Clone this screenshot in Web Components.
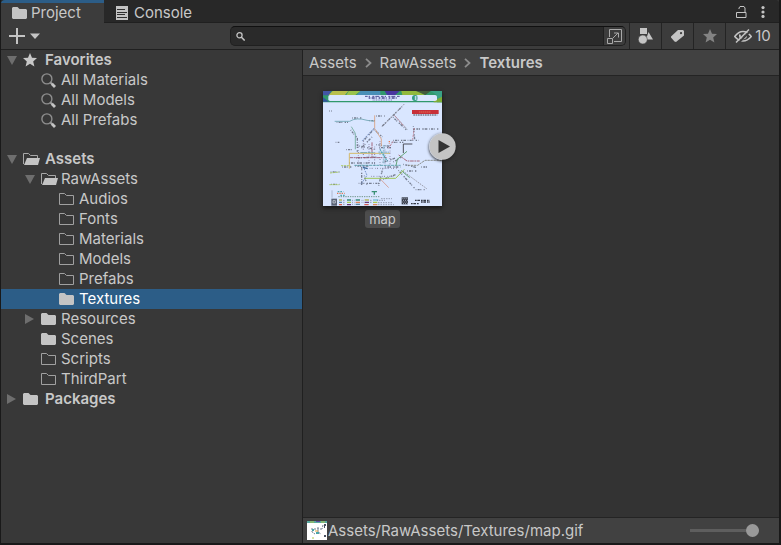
<!DOCTYPE html>
<html lang="en">
<head>
<meta charset="utf-8">
<title>Project</title>
<style>
html,body{height:100%;margin:0;background:#191919}
body{font:15px/20px Inter,"Noto Sans",sans-serif;color:#c8c8c8}
</style>
</head>
<body>
<project-window></project-window>
<script>
const ICONS = {
folder:['15 12','<path fill="#c4c4c4" d="M1 0h4.500l2 2H14l1 1v8l-1 1H1l-1-1V1z"/>'],
outline:['15 12','<path fill="none" stroke="#a0a0a0" d="M.5.5h5l2 2h7v9H.5z"/>'],
open:['17 12','<path fill="none" stroke="#a8a8a8" d="M.5 11V.5h5l2 2h7V5"/><path fill="#c4c4c4" d="M4 5h13l-2 7H1z"/>'],
doc:['12 14','<path fill="#c4c4c4" d="M0 0h12v14H0z"/><path stroke="#303030" d="M1 3.500h8M1 6.500h10M1 8.500h8M1 11.500h10"/>'],
lock:['11 12','<path fill="none" stroke="#c4c4c4" d="M.5 6.500h9.500v5H.5zM3 3V2l1-1.500h4L9 2v4.500"/>'],
dots:['4 12','<g fill="#c4c4c4"><circle cx="2" cy="1.600" r="1.600"/><circle cx="2" cy="6" r="1.600"/><circle cx="2" cy="10.400" r="1.600"/></g>'],
plus:['16 16','<path stroke="#c4c4c4" stroke-width="2" d="M0 8h16M8 0v16"/>'],
drop:['10 6','<path fill="#c4c4c4" d="M0 .5h10L5 6z"/>'],
down:['10 9','<path fill="#6e6e6e" d="M0 0h10L5 9z"/>'],
right:['9 10','<path fill="#6e6e6e" d="M0 0v10l9-5z"/>'],
star:['14 14','<path fill="currentColor" d="m7 0 2 4.700 5 .4-3.800 3.300 1.200 5L7 10.800l-4.400 2.600 1.200-5L0 5.100l5-.4z"/>'],
search:['9 9','<circle cx="3.500" cy="3.300" r="2.600" fill="none" stroke="#c4c4c4" stroke-width="1.300"/><path stroke="#c4c4c4" stroke-width="1.600" d="m5.200 5 3.500 3.500"/>'],
lens:['15 15','<circle cx="5.900" cy="5.900" r="5" fill="none" stroke="#8e8e8e" stroke-width="1.400"/><path stroke="#a6a6a6" stroke-width="1.800" d="m9.600 9.600 1.400 1.400"/><path stroke="#c4c4c4" stroke-width="2.800" d="m10.800 10.800 3.200 3.200"/>'],
expand:['15 15','<path fill="none" stroke="#a8a8a8" d="M2.500 8V.5h12v12H7M.5 9.500h5v5h-5zM6 9l5-5M7 4h4.500v4.500"/>'],
shapes:['15 16','<path fill="#c4c4c4" d="M2 0h7v6H2zM10.500 4 15 11.500H8z"/><circle cx="4.800" cy="11.500" r="4.500" fill="#c4c4c4" stroke="#3c3c3c" stroke-width=".6"/>'],
tag:['13 12','<path fill="#c4c4c4" fill-rule="evenodd" d="M7 0h5l1 1v4.500L5 12 3.500 11.500 0 7.500 0 6.500zM10 2a1 1 0 1 0 .1 2.200A1 1 0 0 0 10 2z"/>'],
eye:['18 14','<g fill="none" stroke="#c4c4c4"><path stroke-width="1.500" d="M.7 7.500Q4.500 2.500 9 2.500t8.300 5Q13.500 12 9 12T.7 7.500z"/><path stroke-width="1.800" d="M6 5.500Q5 9.500 9 9.500q3.500 0 3-4"/><path stroke="#3c3c3c" stroke-width="2" d="M3.800 14.500 17 1.500"/><path stroke-width="1.500" d="M2 13.500 15 .5"/></g>'],
chevron:['7 10','<path fill="none" stroke="#8c8c8c" stroke-width="1.800" d="m1 .8 4.500 4.200L1 9.200"/>'],
play:['27 27','<circle cx="13.500" cy="13.500" r="13.200" fill="#c4c4c4"/><path fill="#333" d="M9.500 7v13L21 13.500z"/>']
};
function define(name, html, setup){
  const t=document.createElement('template'); t.innerHTML=html;
  customElements.define(name, class extends HTMLElement{
    connectedCallback(){
      if(this.shadowRoot)return;
      const r=this.attachShadow({mode:'open'});
      r.append(t.content.cloneNode(true));
      if(setup)setup(this,r);
    }
  });
}
define('ui-icon','<style>:host{display:block;flex:none}svg{display:block}</style>',(el,r)=>{
  const [size,body]=ICONS[el.getAttribute('name')],[w,h]=size.split(' ');
  const b=document.createElement('div');
  b.innerHTML=`<svg aria-hidden="true" width="${w}" height="${h}" viewBox="0 0 ${size}">${body}</svg>`;
  r.append(b);
});
define('panel-tab',`<style>
:host{display:block}
button{all:unset;box-sizing:border-box;display:flex;align-items:center;gap:6px;height:24px;padding:2px 21px 0 12px}
:host([active]) button{background:linear-gradient(#2c5d87 3px,#3c3c3c 3px);border-radius:4px 0 0 0;width:103px;gap:4px;padding-left:11px}
</style><button role="tab"><slot></slot></button>`,(el,r)=>{
  const b=r.querySelector('button');b.setAttribute('aria-selected',el.hasAttribute('active'));
  const i=document.createElement('ui-icon');i.setAttribute('name',el.getAttribute('icon'));b.prepend(i);
});
define('tool-button',`<style>
:host{display:block;align-self:stretch}
button{all:unset;box-sizing:border-box;height:100%;width:100%;min-width:32px;display:flex;align-items:center;justify-content:center;gap:3px}
:host([divided]) button{border-left:1px solid #242424}
</style><button><slot></slot></button>`,(el,r)=>r.querySelector('button').setAttribute('aria-label',el.getAttribute('label')));
define('search-field',`<style>
:host{display:flex;flex:1;min-width:0;height:20px;box-sizing:border-box;background:#2a2a2a;border:1px solid #202020;border-top-color:#101010;border-radius:5px;overflow:hidden}
label{display:flex;flex:1;align-items:center;gap:6px;padding-left:5px;min-width:0}
input{all:unset;flex:1;min-width:0;font:inherit}
button{all:unset;display:flex;align-items:center;justify-content:center;width:21px;background:#3c3c3c;border-left:1px solid #202020}
</style><label><ui-icon name="search"></ui-icon><input type="text" aria-label="Search"></label><button aria-label="Open in search"><ui-icon name="expand"></ui-icon></button>`);
define('tree-row',`<style>
:host{display:block}
button{all:unset;box-sizing:border-box;width:100%;height:20px;display:flex;align-items:center;padding-left:calc(6px + var(--depth)*18px);white-space:nowrap}
:host([root]) button{font-weight:600}
:host([selected]) button{background:#2c5d87;color:#fff}
.arrow{width:16px;flex:none;display:flex}
.icon{width:20px;flex:none;display:flex}
:host([root]) .icon{width:22px}
</style><button role="treeitem"><span class="arrow"></span><span class="icon"></span><slot></slot></button>`,(el,r)=>{
  el.style.setProperty('--depth',el.getAttribute('depth')||0);
  for(const k of ['arrow','icon']){ if(!el.hasAttribute(k))continue;
    const i=document.createElement('ui-icon');i.setAttribute('name',el.getAttribute(k));r.querySelector('.'+k).append(i);}
});
define('folder-tree',`<style>
:host{display:block;box-sizing:border-box;background:#383838;border-right:1px solid #202020;overflow:hidden}
section+section{margin-top:19px}
</style>
<section role="tree" aria-label="Favorites">
<tree-row root arrow="down" icon="star">Favorites</tree-row>
<tree-row depth="1" icon="lens">All Materials</tree-row>
<tree-row depth="1" icon="lens">All Models</tree-row>
<tree-row depth="1" icon="lens">All Prefabs</tree-row>
</section>
<section role="tree" aria-label="Folders">
<tree-row root arrow="down" icon="open">Assets</tree-row>
<tree-row depth="1" arrow="down" icon="open">RawAssets</tree-row>
<tree-row depth="2" icon="outline">Audios</tree-row>
<tree-row depth="2" icon="outline">Fonts</tree-row>
<tree-row depth="2" icon="outline">Materials</tree-row>
<tree-row depth="2" icon="outline">Models</tree-row>
<tree-row depth="2" icon="outline">Prefabs</tree-row>
<tree-row depth="2" icon="folder" selected>Textures</tree-row>
<tree-row depth="1" arrow="right" icon="folder">Resources</tree-row>
<tree-row depth="1" icon="folder">Scenes</tree-row>
<tree-row depth="1" icon="outline">Scripts</tree-row>
<tree-row depth="1" icon="outline">ThirdPart</tree-row>
<tree-row root arrow="right" icon="folder">Packages</tree-row>
</section>`);
define('map-picture',`<style>:host{display:block}svg{display:block;width:100%;height:auto}</style>
<svg viewBox="39 33 357 345" fill="none" role="img" aria-label="Transit map">
<path fill="#d9e6ff" d="M39 33h357v345H39z"/>
<path fill="#31996c" d="M39 33h357v34H39z"/>
<path fill="#4355a5" d="M39 33h25l-7 13H39z"/><path fill="#b8bf4d" d="m68 33 47 0-10 12H56z"/><path fill="#498fb7" d="M151 33h60v12h-70z"/><path fill="#9ac34b" d="m116 33 35 0-15 12h-27z"/><path fill="#4936a0" d="m224 33 45 0-13 12h-25z"/><path fill="#91b93d" d="m274 33 54 0 16 12h-67z"/><path fill="#425b3c" d="m318 33 44 0-16 12z"/><path fill="#3aa287" d="M361 33h35v34h-15V45z"/><path fill="#7dac37" d="m371 62 25-12v17h-25z"/><path fill="#33569d" d="m39 52 18 13H39z"/>
<path fill="#d9e6ff" d="M60 45h315q6 0 6 5v8q0 5-6 5H60q-5 0-5-5v-8q0-5 5-5z"/>
<g stroke="#4c4b91"><path stroke-width="3" stroke-dasharray="8 3 4 7 6 3 12 5" d="M165 49h106"/><path stroke-width="4" stroke-dasharray="5 4 9 3 3 6" d="M176 54h88"/><path stroke-width="2" stroke-dasharray="3 2" d="M188 60h60"/></g>
<circle cx="315" cy="54" r="9" fill="#329b80"/><path stroke="#d9e6ff" stroke-width="3" d="M316 48v12m3-9h5m-5 6h5"/>
<path fill="#c72f38" d="M306 90h80v12h-80z"/><path stroke="#ec8a60" stroke-width="3" stroke-dasharray="3 3" d="M328 96h36"/><path stroke="#45434c" stroke-width="3" stroke-dasharray="5 2" d="M310 105h72"/>
<g stroke="#5c6373" stroke-width="4" stroke-dasharray="2 4 6 2 3 7 4 3 8 5" opacity=".8">
<path d="M80 127h34m12-13h30m22 8h18m2-14h26M57 93h8M276 80l-61 60m34-28 40 37m21-10 4 39m-1-31h75M122 150l20 25v42m18-34 33-37m-39 58 34-35m5-20 24 22m32 10h76M77 187h11m20 22h21m19-11 46 10m5-14 40 5m6-12h35m-73 16h36m-105 31 65-3m-86 18h78m23-2 42-14m-10 13 27-16m-51 31h45m9-8 42 10m-31 10h31m12-12h21M62 276h26m-25 37h25m67-59v61m8-28 8 28m47-49-12 51m-60-7h65m9-12 39-15m6-12 50 55m2 3h27m-248-68h29m11-3h44"/>
</g>
<g stroke="#66547b" stroke-width="3" stroke-dasharray="2 4 3 7" opacity=".75"><path d="M145 194v58m15-68v51m17-43v57m17-49v59m16-76v78m15-52v57m15-70v68M163 265h102m-81 24h70"/></g>
<g stroke-width="3" opacity=".85">
<path stroke="#6fa5b3" d="m74 124h45q20-13 52-3l24 3"/><path stroke="#72ad9d" d="m124 140 12 20v48"/><path stroke="#d9a17e" d="M194 106v40l20 31 0 22"/>
<path stroke="#6684bd" stroke-dasharray="5 3" d="m193 144-38 40M159 258l12 28-19 28"/><path stroke="#8b8993" stroke-dasharray="4 3" d="m283 72-67 68m37-34 39 42m58 178-73-54"/>
<path stroke="#b87788" stroke-dasharray="7 3" d="m254 107 28 32m31 5-5 35m-59 5-13 21"/>
<path stroke="#9b5267" stroke-dasharray="11 2 5 2" d="M186 187v45M119 233h112m35-8 25 18h38"/><path stroke="#4f9aa5" stroke-dasharray="9 2" d="M151 218h40m-58 38h139"/>
<path stroke="#d4b351" d="M118 266v-46h122"/><path stroke="#35353e" d="M280 219v-27h27"/><path stroke="#519b63" d="m291 214-29 24-4 19m15 14 26 22"/>
<path stroke="#96c23f" d="M163 295h94l26-27"/><path stroke="#a8ca5c" stroke-dasharray="7 2" d="M60 279l28-3m-30 38h30m5-57h28"/><path stroke="#d49b91" d="m212 298 24 25"/><path stroke="#80837c" stroke-dasharray="7 2" d="M294 256h29l22-15h49"/><path stroke="#91bad0" stroke-width="5" stroke-dasharray="5 2" d="M221 195v57M205 217h32"/>
</g>
<g stroke-width="4"><path stroke="#df7955" stroke-dasharray="4 3" d="M81 340h23m134-157v8"/><path stroke="#52a8b1" stroke-dasharray="5 3" d="M83 335h17m-9 11h13m106-138 22 36"/><path stroke="#399074" d="M185 335h16m-8 0v9"/><path stroke="#3e6b9b" d="M159 262l14 4"/></g>
<path stroke="#72968b" stroke-width="3" stroke-dasharray="4 3" d="M85 350h123"/><path stroke="#9aa5bb" stroke-width="2" d="M66 331v22"/>
<path fill="#596275" d="M64 356h17v21H64z"/><path stroke="#dce4ec" stroke-width="2" d="M69 362h7v7h-7z"/>
<g stroke-width="4"><path stroke="#b2b75e" d="M87 360h9m68 0h13"/><path stroke="#5c88a4" d="M87 367h9m41 6h13"/><path stroke="#d45d51" d="M87 374h9m67 0h13"/><path stroke="#378a78" d="M111 360h12m14 0h13"/><path stroke="#a7ca54" d="M111 367h12m66 0h13"/><path stroke="#683b74" d="M111 374h12m41-7h13"/><path stroke="#df865c" d="M137 367h13m39 7h13"/><path stroke="#74bdd4" d="M189 360h16"/></g>
<g stroke="#747b8c" stroke-width="3" stroke-dasharray="2 3"><path d="M99 361h6m-6 6h6m-6 6h6m22-12h6m-6 6h6m-6 6h6m22-12h6m-6 6h6m19-6h6m-6 6h6m16-6h22m-20 7h44m-35-12h34m-43 18h49"/></g>
<path fill="#363a46" d="M275 352h19v21h-19z"/><path stroke="#d9e6ff" stroke-width="2" stroke-dasharray="3 3" d="M277 356h15m-13 5h15m-17 5h15m-13 5h15"/><path stroke="#343946" stroke-width="4" stroke-dasharray="5 2 8 3" d="M315 361h44m-56 10h23m7-5h27"/>
</svg>`);
define('asset-tile',`<style>
:host{display:inline-flex;flex-direction:column;align-items:center;width:119px}
.thumb{position:relative;width:100%;box-shadow:0 2px 4px #151515}
button{all:unset;position:absolute;right:-14px;top:42px;border-radius:50%;box-shadow:0 1px 3px #222}
.name{margin-top:4px;padding:0 4px;background:#4d4d4d;border-radius:3px;font-size:13px;line-height:18px}
</style><div class="thumb"><map-picture></map-picture><button aria-label="Play"><ui-icon name="play"></ui-icon></button></div><span class="name"><slot></slot></span>`);
define('crumb-bar',`<style>
:host{display:block}
nav{display:flex;align-items:center;gap:8px;height:25px;padding:0 6px;background:#414141;border-bottom:1px solid #242424}
a{color:inherit;text-decoration:none}a[aria-current]{font-weight:600}
</style><nav aria-label="Folder path"><a href="#assets">Assets</a><ui-icon name="chevron"></ui-icon><a href="#raw">RawAssets</a><ui-icon name="chevron"></ui-icon><a href="#textures" aria-current="page">Textures</a></nav>`);
define('status-bar',`<style>
:host{display:flex;align-items:center;height:25px;padding:0 20px 0 4px;background:#414141;border-top:1px solid #242424}
.mini{width:20px;margin-right:1px}.path{flex:1;white-space:nowrap}
input{appearance:none;width:69px;height:14px;margin:0;background:linear-gradient(#5e5e5e,#5e5e5e) center/100% 3px no-repeat}
input::-webkit-slider-thumb{appearance:none;width:13px;height:13px;border-radius:50%;background:#999}
</style><svg class="mini" width="20" height="19" viewBox="0 0 20 19" aria-hidden="true"><path fill="#fff" d="M0 0h20v19H0z"/><path fill="#57a79f" d="M0 0h20v2H0z"/><path stroke="#b4c64b" d="M3 1h4m7 0h4M5 17h2"/><path stroke="#5b4ba4" d="M9 .5h4"/><path fill="none" stroke="#748091" stroke-dasharray="2 1" d="M5 7v4l3 2m3-7v5l3 2m2-9-1 4m-8 0h8"/><path stroke="#e3a542" d="M8 10h3"/><path stroke="#49a4a8" stroke-width="2" d="M5 9h2m2 3h3"/><path stroke="#4a5262" stroke-width="2" d="M17 4h2m-2 2h1M17 15h2"/></svg>
<span class="path"><slot></slot></span><input type="range" value="100" aria-label="Icon size">`);
define('project-window',`<style>
:host{display:flex;flex-direction:column;height:100vh;box-sizing:border-box;border:solid #191919;border-width:0 2px 2px 1px;background:#333}
.tabs{display:flex;align-items:flex-start;height:23px;background:#282828;box-shadow:inset 0 -1px #202020;border-radius:0 4px 0 0}
.tabs .spacer{flex:1}
.window{display:flex;align-self:stretch;align-items:center;gap:14px;padding-right:14px}
.window button{all:unset}
.bar{display:flex;align-items:center;height:26px;background:#3c3c3c;border-bottom:1px solid #202020}
.add{all:unset;display:flex;align-items:center;gap:5px;padding-left:8px;width:221px}
.tools{display:flex;align-self:stretch;margin-left:3px}
.count{width:54px;white-space:nowrap}
.main{display:grid;grid-template-columns:minmax(0,302px) minmax(0,1fr);flex:1;min-height:0}
.content{display:flex;flex-direction:column;min-height:0}
.assets{flex:1;padding:15px 20px}
</style>
<header><div class="tabs" role="tablist"><panel-tab active icon="folder">Project</panel-tab><panel-tab icon="doc">Console</panel-tab><span class="spacer"></span>
<div class="window"><button aria-label="Lock"><ui-icon name="lock"></ui-icon></button><button aria-label="Menu"><ui-icon name="dots"></ui-icon></button></div></div>
<div class="bar"><button class="add" aria-label="Create"><ui-icon name="plus"></ui-icon><ui-icon name="drop"></ui-icon></button><search-field></search-field>
<div class="tools"><tool-button divided label="Search by type"><ui-icon name="shapes"></ui-icon></tool-button><tool-button divided label="Search by label"><ui-icon name="tag"></ui-icon></tool-button><tool-button divided label="Save search" style="color:#838383"><ui-icon name="star"></ui-icon></tool-button><tool-button class="count" divided label="Hidden packages 10"><ui-icon name="eye"></ui-icon>10</tool-button></div></div></header>
<div class="main"><folder-tree></folder-tree><div class="content"><crumb-bar></crumb-bar><div class="assets"><asset-tile>map</asset-tile></div><status-bar>Assets/RawAssets/Textures/map.gif</status-bar></div></div>`);
</script>
</body>
</html>
